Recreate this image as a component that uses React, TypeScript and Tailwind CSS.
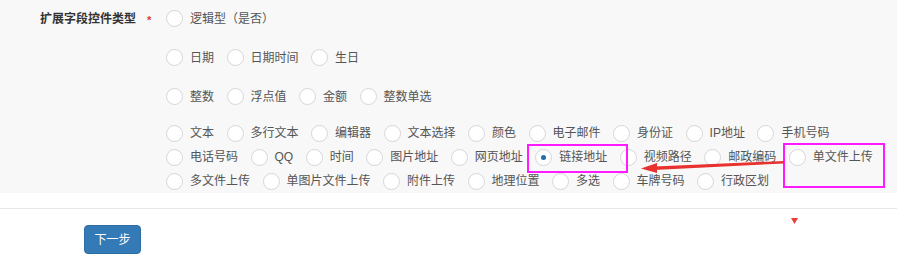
import React from "react";

type Item = { label: string; checked?: boolean };

const rows: Item[][] = [
  [{ label: "日期" }, { label: "日期时间" }, { label: "生日" }],
  [{ label: "整数" }, { label: "浮点值" }, { label: "金额" }, { label: "整数单选" }],
];

const dense: Item[][] = [
  [
    { label: "文本" },
    { label: "多行文本" },
    { label: "编辑器" },
    { label: "文本选择" },
    { label: "颜色" },
    { label: "电子邮件" },
    { label: "身份证" },
    { label: "IP地址" },
    { label: "手机号码" },
  ],
  [
    { label: "电话号码" },
    { label: "QQ" },
    { label: "时间" },
    { label: "图片地址" },
    { label: "网页地址" },
    { label: "链接地址", checked: true },
    { label: "视频路径" },
    { label: "邮政编码" },
    { label: "单文件上传" },
  ],
  [
    { label: "多文件上传" },
    { label: "单图片文件上传" },
    { label: "附件上传" },
    { label: "地理位置" },
    { label: "多选" },
    { label: "车牌号码" },
    { label: "行政区划" },
  ],
];

function Radio({ label, checked }: Item) {
  return (
    <label className="flex items-center mr-[12.5px] shrink-0">
      <span className="w-[17px] h-[17px] rounded-full border border-[#d6d6d6] bg-white flex items-center justify-center shrink-0">
        {checked && <span className="w-[5px] h-[5px] rounded-full bg-[#1f6fa8]" />}
      </span>
      <span className="ml-[7px] text-[12px] leading-none text-[#555] whitespace-nowrap">{label}</span>
    </label>
  );
}

export default function App() {
  return (
    <div
      className="relative w-[897px] h-[259px] bg-white overflow-hidden"
      style={{ fontFamily: '"Liberation Sans", "Noto Sans CJK SC", sans-serif' }}
    >
      <div className="h-[193px] bg-[#f8f8f8] flex">
        <div className="w-[166px] shrink-0 flex pt-[6px] h-[30px] items-center">
          <div className="w-[136px] text-right text-[12px] font-bold text-[#333] leading-none pt-[1px]">
            扩展字段控件类型
          </div>
          <div className="ml-[11px] text-[#e53935] text-[11px] font-bold leading-none pt-[5px]">*</div>
        </div>
        <div className="flex flex-col pt-[6px]">
          <div className="h-[24px] flex items-center mt-[1px]">
            <Radio label="逻辑型（是否）" />
          </div>
          {rows.map((r, i) => (
            <div key={i} className="h-[24px] flex items-center mt-[16px]">
              {r.map((it) => (
                <Radio key={it.label} {...it} />
              ))}
            </div>
          ))}
          <div className="mt-[13px] flex flex-col">
            {dense.map((r, i) => (
              <div key={i} className="h-[24px] flex items-center">
                {r.map((it) => (
                  <Radio key={it.label} {...it} />
                ))}
              </div>
            ))}
          </div>
        </div>
      </div>
      <div className="mt-[15px] border-t border-[#e8e8e8] pt-[16px] pl-[84px]">
        <button className="w-[57px] h-[29px] rounded-[4px] bg-[#337ab7] border border-[#2e6da4] text-white text-[12px] leading-none">
          下一步
        </button>
      </div>

      {/* annotations */}
      <div className="absolute left-[527px] top-[144px] w-[101px] h-[29px] border-2 border-[#ff1aff]" />
      <div className="absolute left-[783px] top-[143px] w-[102px] h-[45px] border-2 border-[#ff1aff]" />
      <svg className="absolute left-[636px] top-[154px]" width="152" height="22" viewBox="0 0 152 22">
        <path d="M148 7 L18 12.5 L18 16 L148 9.5 Z" fill="#e8322f" />
        <polygon points="5,14.5 21,9 21,19" fill="#e8322f" />
      </svg>
      <svg className="absolute left-[791px] top-[218px]" width="7" height="6" viewBox="0 0 7 6">
        <polygon points="0,0 7,0 3.5,6" fill="#f03a3a" />
      </svg>
    </div>
  );
}
